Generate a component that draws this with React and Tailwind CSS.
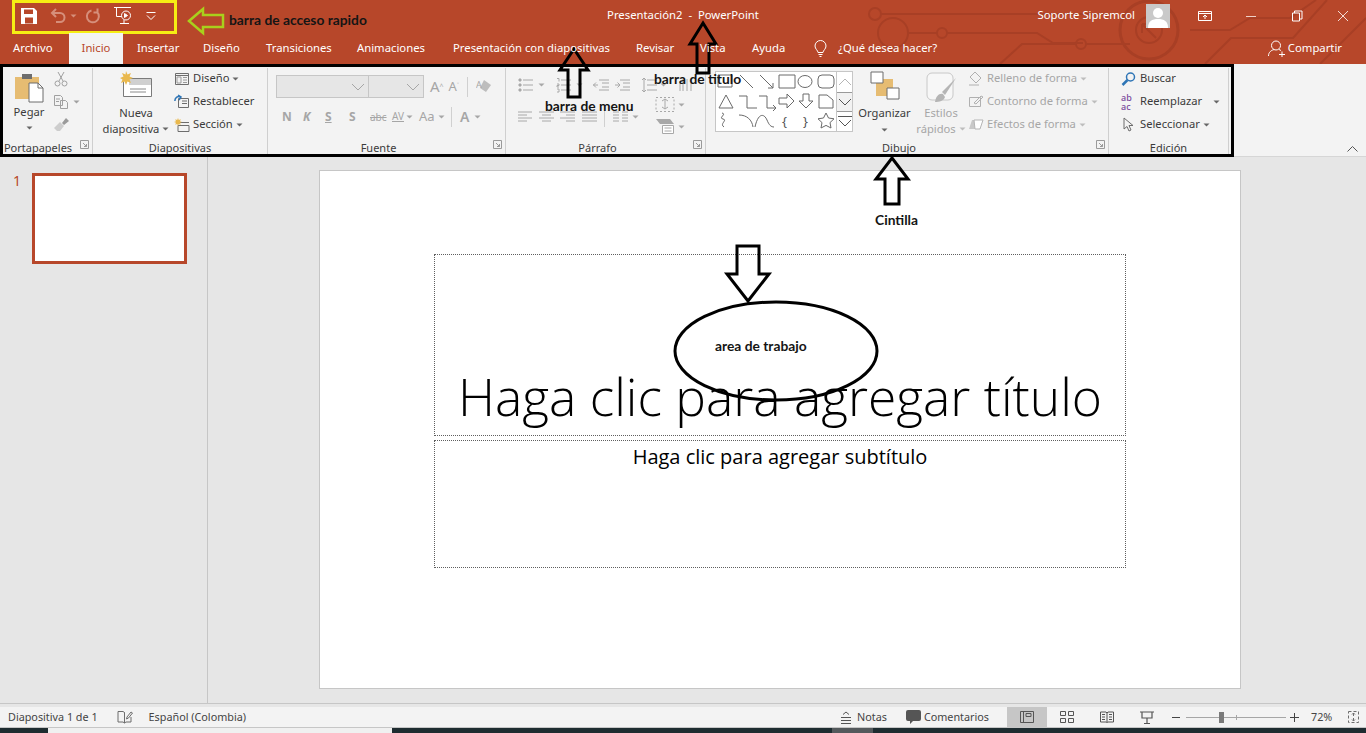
/**
 * PowerPoint window with hand-drawn annotations
 */

const Caret = ({ className = '' }) => (
  <svg width="7" height="4" viewBox="0 0 7 4" className={`shrink-0 ${className}`}>
    <path d="M0.5 0.5h6L3.5 3.5z" fill="currentColor" />
  </svg>
);

const Launcher = () => (
  <svg width="9" height="9" viewBox="0 0 9 9" fill="none" stroke="#9a9a9a">
    <path d="M0.5 8.500v-8h8v8z" />
    <path d="M3 3l3.500 3.500M6.500 4v2.500H4" />
  </svg>
);

const SmallIcon = ({ children, className = '' }) => (
  <svg width="16" height="16" viewBox="0 0 16 16" fill="none" stroke="currentColor" className={`shrink-0 ${className}`}>
    {children}
  </svg>
);

const Group = ({ label, width, launcher, children }) => (
  <div className={`flex flex-col shrink-0 border-r border-[#cfcfcf] ${width}`}>
    <div className="flex-1 flex min-h-0">{children}</div>
    <div className="relative h-[15px] flex items-center justify-center text-[11px] leading-none text-[#3b3b3b]">
      {label}
      {launcher && <span className="absolute right-[3px] top-0 flex"><Launcher /></span>}
    </div>
  </div>
);

const RibbonRow = ({ icon, label, caret, disabled }) => (
  <div className={`h-[23px] flex items-center gap-[3px] whitespace-nowrap ${disabled ? 'text-[#a6a6a6]' : 'text-[#3b3b3b]'}`}>
    {icon}
    <span>{label}</span>
    {caret && <Caret className={disabled ? 'text-[#bdbdbd]' : 'text-[#666666]'} />}
  </div>
);

const TitleBar = () => (
  <div className="relative z-10 h-[33px] pb-[2px] grid grid-cols-[1fr_auto_1fr] items-center text-white">
    <div className="flex items-center pl-[21px]">
      <svg width="16" height="16" viewBox="0 0 16 16">
        <path d="M0 0h13l3 3v13H0z" fill="#ffffff" />
        <path d="M3 1.500h9v4.500H3z" fill="#b7472a" />
        <path d="M4 9.500h8v6H4z" fill="#b7472a" />
      </svg>
      <div className="flex items-center gap-[3px] text-[#d68f7b] ml-[13px]">
        <svg width="17" height="15" viewBox="0 0 17 15" fill="none" stroke="currentColor" strokeWidth="2">
          <path d="M6 1L2 5l4 4M2 5h8a4.500 4.500 0 0 1 0 9H6" />
        </svg>
        <Caret />
      </div>
      <svg width="16" height="16" viewBox="0 0 16 16" fill="none" stroke="#d68f7b" strokeWidth="2" className="ml-[8px]">
        <path d="M6.500 2.500a6 6 0 1 0 5.500 1.500M12.500 0.500v4h-4" />
      </svg>
      <svg width="19" height="19" viewBox="0 0 19 19" fill="none" stroke="#ffffff" className="ml-[13px]">
        <path d="M0 1.500h17M2.500 1.500v9h5" />
        <circle cx="12" cy="9.500" r="4.500" />
        <path d="M10.500 7.500v4l3-2z" fill="#ffffff" />
        <path d="M6 17.500h9M10 14v3.500" />
      </svg>
      <svg width="10" height="8" viewBox="0 0 10 8" fill="none" stroke="#ffffff" className="ml-[13px]">
        <path d="M0.500 0.500h9M1 3.500l4 4 4-4" />
      </svg>
    </div>
    <div className="text-[11.300px] whitespace-pre">Presentación2  -  PowerPoint</div>
    <div className="flex items-center justify-end">
      <span className="text-[11.300px] whitespace-nowrap">Soporte Sipremcol</span>
      <div className="w-[24px] h-[24px] ml-[11px] bg-[#c9c9c9] overflow-hidden">
        <svg width="24" height="24" viewBox="0 0 24 24">
          <circle cx="12" cy="9" r="5" fill="#ffffff" />
          <path d="M2 24c0-7 4-9 10-9s10 2 10 9z" fill="#ffffff" />
        </svg>
      </div>
      <div className="flex items-center w-[196px] pl-[12px]">
        <svg width="46" height="12" viewBox="0 0 46 12" fill="none" stroke="#ffffff">
          <path d="M16.500 1.500h13v9h-13zM16.500 3.500h13M23 9V5M21 7l2-2 2 2" />
        </svg>
        <svg width="46" height="12" viewBox="0 0 46 12" fill="none" stroke="#f0d0c6">
          <path d="M18 6.500h10" />
        </svg>
        <svg width="46" height="12" viewBox="0 0 46 12" fill="none" stroke="#ffffff">
          <path d="M18.500 3h7v8h-7zM20.500 3V1h7.500v8h-2.500" />
        </svg>
        <svg width="46" height="12" viewBox="0 0 46 12" fill="none" stroke="#f3dcd5">
          <path d="M18 1l10 10M28 1L18 11" />
        </svg>
      </div>
    </div>
  </div>
);

const CircuitLines = () => (
  <svg width="536" height="64" viewBox="830 0 536 64" fill="none" stroke="#a83f25" strokeWidth="2" className="absolute right-0 top-0">
    <circle cx="875" cy="14" r="6" />
    <circle cx="893" cy="33" r="15" />
    <path d="M881 14H1110M908 33h30" />
    <circle cx="942" cy="33" r="5" />
    <path d="M947 33h90l16 10h30" />
    <circle cx="1081" cy="44" r="5" />
    <path d="M1000 64l22-20h55M1086 44h44" />
    <circle cx="1149" cy="30" r="29" strokeWidth="3" />
    <circle cx="1149" cy="30" r="13" />
    <path d="M1142 24h9M1142 24v9M1142 24l14 14" />
    <path d="M1190 30h40l20-12h40l26-18M1205 64l26-26h62l34-38M1320 64l46-46" />
  </svg>
);

const Tabs = () => (
  <div className="relative z-10 h-[31px] flex items-stretch text-[11.300px] text-white">
    {[
      ['Archivo', 'w-[69px] pl-[13px]'],
      ['Inicio', 'w-[54px] justify-center bg-[#f3f3f3] text-[#b7472a]'],
      ['Insertar', 'w-[66px] pl-[14px]'],
      ['Diseño', 'w-[63px] pl-[14px]'],
      ['Transiciones', 'w-[91px] pl-[14px]'],
      ['Animaciones', 'w-[96px] pl-[14px]'],
      ['Presentación con diapositivas', 'w-[183px] pl-[14px]'],
      ['Revisar', 'w-[64px] pl-[14px]'],
      ['Vista', 'w-[52px] pl-[14px]'],
      ['Ayuda', 'w-[62px] pl-[14px]'],
    ].map(([label, cls]) => (
      <div key={label} className={`flex items-center whitespace-nowrap ${cls}`}>{label}</div>
    ))}
    <div className="flex items-center pl-[14px] gap-[11px]">
      <svg width="13" height="17" viewBox="0 0 13 17" fill="none" stroke="#ffffff">
        <path d="M4 12.500c0-2-3-3.500-3-6.500a5.500 5.500 0 0 1 11 0c0 3-3 4.500-3 6.500zM4.500 14.500h4M5.500 16.500h2" />
      </svg>
      <span className="whitespace-nowrap">¿Qué desea hacer?</span>
    </div>
    <div className="ml-auto flex items-center pr-[24px] gap-[2px]">
      <svg width="18" height="17" viewBox="0 0 18 17" fill="none" stroke="#ffffff">
        <circle cx="8" cy="5.500" r="4.500" />
        <path d="M0.500 16c0-4 3-6 6-6.500M11 9.500l2 1M11 14.500h6M14 11.500v6" />
      </svg>
      <span>Compartir</span>
    </div>
  </div>
);

const Ribbon = () => (
  <div className="h-[93px] shrink-0 bg-[#f3f3f3] flex pl-[3px] pt-[4px] pb-[1px] text-[11.200px] border-b border-[#d6d6d6] relative">
    <Group label={<span className="-ml-[19px]">Portapapeles</span>} width="w-[90px]" launcher>
      <div className="w-[48px] flex flex-col items-center pl-[4px] text-[#3b3b3b]">
        <svg width="30" height="32" viewBox="0 0 30 32" className="mt-[3px]">
          <path d="M1 6h24v22H1z" fill="#e6bc72" />
          <path d="M8 3h10v5H8z" fill="#6d6d6d" />
          <path d="M15 12h9l5 5v14H15z" fill="#ffffff" stroke="#6d6d6d" />
          <path d="M24 12v5h5" fill="none" stroke="#6d6d6d" />
        </svg>
        <span className="mt-[2px] leading-[14px]">Pegar</span>
        <Caret className="mt-[7px] text-[#666666]" />
      </div>
      <div className="flex flex-col pl-[2px] pt-[3px] gap-[7px] text-[#a0a0a0]">
        <svg width="16" height="16" viewBox="0 0 16 16" fill="none" stroke="currentColor">
          <path d="M5 1l5 9M11 1L6 10" />
          <circle cx="4.500" cy="12.500" r="2.500" />
          <circle cx="11.500" cy="12.500" r="2.500" />
        </svg>
        <div className="flex items-center gap-[4px]">
          <svg width="16" height="16" viewBox="0 0 16 16" fill="none" stroke="currentColor">
            <path d="M1.500 1.500h6l2 2v8h-8zM7.500 6.500h5l2 2v6h-7zM3 5h4M3 7.500h3" />
          </svg>
          <Caret />
        </div>
        <svg width="17" height="15" viewBox="0 0 17 15">
          <path d="M9 6l4-5 3 3-5 4z" fill="#9a9a9a" />
          <path d="M1 11l6-6 4 4-4 5H4z" fill="#cdcdcd" />
        </svg>
      </div>
    </Group>

    <Group label="Diapositivas" width="w-[175px]">
      <div className="w-[78px] pl-[8px] flex flex-col items-center text-[#3b3b3b] leading-[16px]">
        <svg width="32" height="27" viewBox="0 0 32 27" className="mt-[3px]">
          <path d="M3.500 7.500h28v18h-28z" fill="#ffffff" stroke="#7a7a7a" />
          <path d="M9 8h22v6H9z" fill="#d0d0d0" />
          <path d="M10 18h16M10 21h16" stroke="#8a8a8a" />
          <path d="M6 0l1.500 3.500L11 2l-1.500 3.500L13 7l-3.500 1.500L11 12 7.500 10.500 6 14 4.500 10.500 1 12l1.500-3.500L0 7l3.500-1.500L2 2l3.500 1.500z" fill="#e9b84d" />
        </svg>
        <span className="mt-[7px]">Nueva</span>
        <span className="flex items-center gap-[3px] whitespace-nowrap">diapositiva<Caret className="text-[#666666]" /></span>
      </div>
      <div className="pl-[3px] -mt-[1px] flex flex-col">
        <RibbonRow label="Diseño" caret icon={
          <SmallIcon className="text-[#6d6d6d]"><path d="M1.500 2.500h13v11h-13zM1.500 4.500h13" /><path d="M3 6h4v6H3zM9 6.500h4M9 9h4M9 11.500h4" stroke="#9a9a9a" /></SmallIcon>
        } />
        <RibbonRow label="Restablecer" icon={
          <SmallIcon className="text-[#6d6d6d]"><path d="M4.500 4.500h10v9h-10zM8 7h5M8 9.500h5" /><path d="M1 7a4 4 0 0 1 6-4M4 1L7 3 5 6" stroke="#2e75b6" strokeWidth="1.500" /></SmallIcon>
        } />
        <RibbonRow label="Sección" caret icon={
          <SmallIcon className="text-[#6d6d6d]"><path d="M4 5.500h11M4 8.500h11v6H4z" /><path d="M4 1l.8 2 2-.8-.8 2 2 .8-2 .8.8 2-2-.8L4 9l-.8-2-2 .8.8-2-2-.8 2-.8-.8-2 2 .8z" fill="#e9b84d" stroke="none" /></SmallIcon>
        } />
      </div>
    </Group>

    <Group label={<span className="-ml-[16px]">Fuente</span>} width="w-[238px]" launcher>
      <div className="flex flex-col pl-[8px] pt-[7px] w-full text-[#a6a6a6]">
        <div className="flex items-center h-[23px]">
          <div className="w-[93px] h-[23px] bg-[#e6e6e6] border border-[#c6c6c6] flex items-center justify-end pr-[3px]">
            <svg width="14" height="8" viewBox="0 0 14 8" fill="none" stroke="#a6a6a6"><path d="M1 1l6 6 6-6" /></svg>
          </div>
          <div className="w-[55px] h-[23px] bg-[#e6e6e6] border border-l-0 border-[#c6c6c6] flex items-center justify-end pr-[3px]">
            <svg width="14" height="8" viewBox="0 0 14 8" fill="none" stroke="#a6a6a6"><path d="M1 1l6 6 6-6" /></svg>
          </div>
          <span className="ml-[6px] text-[15px] leading-none">A<sup className="text-[7px]">^</sup></span>
          <span className="ml-[5px] text-[13px] leading-none">A<sup className="text-[7px]">˅</sup></span>
          <span className="ml-[8px] w-px h-[20px] bg-[#d0d0d0]" />
          <svg width="17" height="15" viewBox="0 0 17 15" className="ml-[8px]">
            <path d="M8 1l7 5-5 7-6-4z" fill="#bdbdbd" />
            <text x="0" y="9" fontSize="9" fill="#a6a6a6" fontFamily="Noto Sans">A</text>
          </svg>
        </div>
        <div className="flex items-center mt-[7px] h-[23px] text-[12px] leading-none pl-[6px]">
          <span className="w-[21px] font-bold">N</span>
          <span className="w-[22px] font-bold italic">K</span>
          <span className="w-[24px] font-bold underline">S</span>
          <span className="w-[21px] font-bold">S</span>
          <span className="w-[22px] text-[10px] line-through">abc</span>
          <span className="w-[24px] text-[10px] flex items-center gap-[2px]"><span className="border-b border-[#a6a6a6]">AV</span><Caret /></span>
          <span className="ml-[3px] w-[32px] flex items-center gap-[3px] text-[13px]">Aa<Caret /></span>
          <span className="w-px h-[20px] bg-[#d0d0d0] mr-[8px]" />
          <span className="text-[14px] font-semibold flex items-center gap-[5px]">A<Caret /></span>
        </div>
      </div>
    </Group>

    <Group label={<span className="-ml-[16px]">Párrafo</span>} width="w-[200px]" launcher>
      <div className="flex flex-col pl-[12px] pt-[5px] text-[#a8a8a8] w-full">
        <div className="flex items-center h-[24px]">
          <SmallIcon><path d="M5 3h10M5 8h10M5 13h10" /><path d="M1 2h2v2H1zM1 7h2v2H1zM1 12h2v2H1z" fill="currentColor" /></SmallIcon>
          <Caret className="ml-[4px]" />
          <SmallIcon className="ml-[11px]"><path d="M5 3h10M5 8h10M5 13h10M1 1.500h2v3M1 7h2v1.500H1V10h2M1 12h2v3H1" /></SmallIcon>
          <Caret className="ml-[4px]" />
          <SmallIcon className="ml-[10px]"><path d="M6 3h10M9 6h7M9 10h7M6 13h10M5 8H0M3 5.500L0.500 8 3 10.500" /></SmallIcon>
          <SmallIcon className="ml-[5px]"><path d="M6 3h10M9 6h7M9 10h7M6 13h10M1 8h5M3.500 5.500L6 8l-2.500 2.500" /></SmallIcon>
          <SmallIcon className="ml-[11px]"><path d="M6 3h10M6 8h10M6 13h10M3 1v14M1 3l2-2 2 2M1 13l2 2 2-2" /></SmallIcon>
          <Caret className="ml-[3px]" />
          <SmallIcon className="ml-[11px]"><path d="M2 14V4h5M5 2v12M9 2v12M13 2v12" /></SmallIcon>
        </div>
        <div className="flex items-start">
          <div className="flex items-center mt-[10px]">
            <SmallIcon><path d="M0 3h14M0 6h9M0 9h14M0 12h9" /></SmallIcon>
            <SmallIcon className="ml-[5px]"><path d="M0 3h15M3 6h9M0 9h15M3 12h9" /></SmallIcon>
            <SmallIcon className="ml-[5px]"><path d="M0 3h15M6 6h9M0 9h15M6 12h9" /></SmallIcon>
            <SmallIcon className="ml-[6px]"><path d="M0 3h15M0 6h15M0 9h15M0 12h15" /></SmallIcon>
            <span className="w-px h-[20px] bg-[#d0d0d0] ml-[6px]" />
            <SmallIcon className="ml-[8px]"><path d="M0 3h6M0 6h6M0 9h6M0 12h6M9 3h6M9 6h6M9 9h6M9 12h6" /></SmallIcon>
            <Caret className="ml-[3px]" />
          </div>
          <div className="flex flex-col ml-[16px] gap-[5px] -mt-[1px]">
            <div className="flex items-center gap-[3px]">
              <svg width="20" height="17" viewBox="0 0 20 17" fill="none" stroke="currentColor"><path d="M1 1.500h18v14H1z" strokeDasharray="2 2" /><path d="M10 3v10M7 5l3-2 3 2M7 11l3 2 3-2" /></svg>
              <Caret />
            </div>
            <div className="flex items-center gap-[3px]">
              <svg width="20" height="17" viewBox="0 0 20 17"><path d="M1 1h14l4 5H5z" fill="#a8a8a8" /><path d="M7.500 7.500h11v8h-11zM9.500 10h7M9.500 13h7" fill="#ffffff" stroke="#a8a8a8" /></svg>
              <Caret />
            </div>
          </div>
        </div>
      </div>
    </Group>

    <Group label={<span className="-ml-[16px]">Dibujo</span>} width="w-[403px]" launcher>
      <div className="ml-[9px] mt-[3px] w-[138px] h-[61px] flex bg-white border border-[#c6c6c6]">
        <svg width="120" height="59" viewBox="0 0 120 59" fill="none" stroke="#6a6a6a" className="shrink-0">
          <path d="M2 3h14v12H2z" />
          <path d="M24 3l13 13M44 3l13 13M57 11v5h-5" />
          <path d="M63 3h16v13H63z" />
          <ellipse cx="89" cy="9.500" rx="7" ry="6" />
          <rect x="102" y="3" width="16" height="13" rx="4" />
          <path d="M3 36l7-13 7 13zM23 24h8v12h10M43 24h8v12h9M57 33l3 3-3 3" />
          <path d="M63 26h8v-4l7 7-7 7v-4h-8zM87 22h6v7h4l-7 7-7-7h4z" />
          <path d="M103 36v-13h8l6 5v8z" />
          <path d="M6 41c5 1-4 5 1 6s-4 5 1 8M23 43c8 0 13 5 14 12M39 55c3-14 9-14 12-7 2 5 4 7 7 7" />
          <text x="66" y="54" fontSize="13" fill="#555555" stroke="none" fontFamily="Noto Sans">{'{'}</text>
          <text x="87" y="54" fontSize="13" fill="#555555" stroke="none" fontFamily="Noto Sans">{'}'}</text>
          <path d="M110 41l2.500 5 5.500.8-4 3.800 1 5.400-5-2.600-5 2.600 1-5.400-4-3.800 5.500-.8z" />
        </svg>
        <div className="flex-1 flex flex-col border-l border-[#c6c6c6]">
          <div className="h-[20px] flex items-center justify-center">
            <svg width="14" height="8" viewBox="0 0 14 8" fill="none" stroke="#b5b5b5"><path d="M1 7l6-6 6 6" /></svg>
          </div>
          <div className="h-[20px] flex items-center justify-center bg-[#f2f2f2] border-y border-[#9a9a9a]">
            <svg width="14" height="8" viewBox="0 0 14 8" fill="none" stroke="#555555"><path d="M1 1l6 6 6-6" /></svg>
          </div>
          <div className="flex-1 flex flex-col items-center justify-center gap-[2px]">
            <span className="w-[14px] h-px bg-[#555555]" />
            <svg width="14" height="8" viewBox="0 0 14 8" fill="none" stroke="#555555"><path d="M1 1l6 6 6-6" /></svg>
          </div>
        </div>
      </div>
      <div className="w-[61px] ml-[1px] flex flex-col items-center text-[#3b3b3b] leading-[16px]">
        <svg width="30" height="30" viewBox="0 0 30 30" className="mt-[3px]">
          <path d="M6 8h17v17H6z" fill="#e6bc72" />
          <path d="M1 1h12v11H1zM17 17h12v11H17z" fill="#ffffff" stroke="#6d6d6d" />
        </svg>
        <span className="mt-[4px]">Organizar</span>
        <Caret className="mt-[7px] text-[#666666]" />
      </div>
      <div className="w-[52px] flex flex-col items-center text-[#a6a6a6] leading-[16px]">
        <svg width="31" height="31" viewBox="0 0 31 31" className="mt-[4px]">
          <rect x="1" y="1" width="26" height="27" rx="5" fill="#f7f7f7" stroke="#c8c8c8" />
          <path d="M30 6L16 20l3 3z" fill="#b5b5b5" />
          <path d="M9 30c1-6 4-9 8-8l2 3c-1 4-6 5-10 5z" fill="#b5b5b5" />
        </svg>
        <span className="mt-[2px]">Estilos</span>
        <span className="flex items-center gap-[3px] whitespace-nowrap">rápidos<Caret className="text-[#bdbdbd]" /></span>
      </div>
      <div className="flex flex-col ml-[1px] -mt-[1px]">
        <RibbonRow disabled label="Relleno de forma" caret icon={
          <SmallIcon className="text-[#b0b0b0]"><path d="M7 1l6 6-5 5-6-6zM1 14h10" /></SmallIcon>
        } />
        <RibbonRow disabled label="Contorno de forma" caret icon={
          <SmallIcon className="text-[#b0b0b0]"><path d="M1.500 3.500h11v9h-11zM6 9l7-7 2 1-7 7z" /></SmallIcon>
        } />
        <RibbonRow disabled label="Efectos de forma" caret icon={
          <svg width="16" height="16" viewBox="0 0 16 16"><path d="M1 12l3-9h11l-3 9z" fill="#c9c9c9" /><path d="M6 3h9l-3 9H7z" fill="#ffffff" stroke="#b5b5b5" /></svg>
        } />
      </div>
    </Group>

    <Group label="Edición" width="w-[120px]">
      <div className="flex flex-col pl-[12px] -mt-[1px] w-full">
        <RibbonRow label="Buscar" icon={
          <svg width="15" height="14" viewBox="0 0 15 14" fill="none" className="shrink-0 mr-[1px]">
            <circle cx="9.500" cy="5" r="4" stroke="#2e75b6" strokeWidth="1.500" />
            <path d="M6.500 8L1.500 13" stroke="#2e75b6" strokeWidth="2.500" />
          </svg>
        } />
        <div className="h-[23px] flex items-center text-[#3b3b3b]">
          <span className="w-[17px] text-[9px] leading-[9px] text-[#7a4a9c] font-medium">ab<br />ac</span>
          <span className="ml-[2px] whitespace-nowrap">Reemplazar</span>
          <Caret className="ml-[11px] text-[#666666]" />
        </div>
        <RibbonRow label="Seleccionar" caret icon={
          <svg width="14" height="16" viewBox="0 0 14 16" fill="none" stroke="#6d6d6d" className="shrink-0 mr-[2px]">
            <path d="M3 1v11l3-2.500 2 4.500 2-1-2-4.500h4z" />
          </svg>
        } />
      </div>
    </Group>

    <svg width="11" height="6" viewBox="0 0 11 6" fill="none" stroke="#555555" className="absolute right-[8px] bottom-[4px]">
      <path d="M0.500 5.500l5-5 5 5" />
    </svg>
  </div>
);

const Workspace = () => (
  <div className="flex-1 flex min-h-0 bg-[#e6e6e6] border-b border-[#c6c6c6]">
    <div className="w-[208px] shrink-0 border-r border-[#c6c6c6] flex items-start pt-[16px] pl-[13px]">
      <span className="text-[14px] leading-[16px] w-[19px] text-[#b7472a]">1</span>
      <div className="w-[155px] h-[91px] bg-white border-[3px] border-[#b7472a]" />
    </div>
    <div className="flex-1 pt-[13px] pl-[111px]">
      <div className="w-[922px] h-[519px] bg-white border border-[#c6c6c6] pt-[83px] pl-[114px] text-black">
        <div className="w-[692px] h-[182px] border border-dotted border-[#5f5f5f] flex items-end justify-center overflow-hidden">
          <span className="text-[51.500px] leading-[66px] mb-[6px] font-light whitespace-nowrap font-['Open_Sans',sans-serif]">Haga clic para agregar título</span>
        </div>
        <div className="w-[692px] h-[128px] mt-[4px] border border-dotted border-[#5f5f5f] text-center text-[20px] leading-[28px] pt-[2px] font-['Open_Sans',sans-serif]">
          Haga clic para agregar subtítulo
        </div>
      </div>
    </div>
  </div>
);

const StatusBar = () => (
  <div className="h-[21px] shrink-0 bg-[#f3f3f3] flex items-stretch text-[10.800px] text-[#444444] border-b border-[#c6c6c6] mt-[3px]">
    <span className="pl-[8px] self-center">Diapositiva 1 de 1</span>
    <svg width="16" height="14" viewBox="0 0 16 14" fill="none" stroke="#6d6d6d" className="self-center ml-[19px]">
      <path d="M1 1.500h5l1.500 1v10.500l-1.500-1H1zM7.500 2.500v10.500l1.500-1h5V7" />
      <path d="M10 7l4-5 1.500 1-4 5-2 1z" />
    </svg>
    <span className="self-center ml-[16px]">Español (Colombia)</span>
    <div className="ml-auto flex items-stretch">
      <div className="flex items-center gap-[5px]">
        <svg width="12" height="13" viewBox="0 0 12 13" fill="none" stroke="#555555"><path d="M3 3.500L6 1l3 2.500M1 6.500h10M1 9.500h10M1 12.500h10" /></svg>
        <span>Notas</span>
      </div>
      <div className="flex items-center gap-[3px] ml-[19px] mr-[18px]">
        <svg width="15" height="14" viewBox="0 0 15 14"><path d="M2 0h11a2 2 0 0 1 2 2v7a2 2 0 0 1-2 2H7l-3 3v-3H2a2 2 0 0 1-2-2V2a2 2 0 0 1 2-2z" fill="#555555" /></svg>
        <span>Comentarios</span>
      </div>
      <div className="w-[40px] bg-[#c6c6c6] flex items-center justify-center">
        <svg width="14" height="12" viewBox="0 0 14 12" fill="none" stroke="#555555"><path d="M0.500 0.500h13v11h-13zM3.500 0.500v11M6 2.500h5v3H6z" /></svg>
      </div>
      <div className="w-[40px] flex items-center justify-center">
        <svg width="14" height="12" viewBox="0 0 14 12" fill="none" stroke="#555555"><path d="M0.500 0.500h5v4h-5zM8.500 0.500h5v4h-5zM0.500 7.500h5v4h-5zM8.500 7.500h5v4h-5z" /></svg>
      </div>
      <div className="w-[40px] flex items-center justify-center">
        <svg width="14" height="12" viewBox="0 0 14 12" fill="none" stroke="#555555"><path d="M0.500 1h5.500l1 1 1-1h5.500v10h-5.500l-1 .500-1-.500H0.500zM7 2v9M2 3.500h3M2 6h3M2 8.500h3M9 3.500h3M9 6h3M9 8.500h3" /></svg>
      </div>
      <div className="w-[40px] flex items-center justify-center">
        <svg width="14" height="13" viewBox="0 0 14 13" fill="none" stroke="#555555"><path d="M0 1h14M2 1v6h10V1M7 7v5M4 12.500h6" strokeWidth="1.200" /></svg>
      </div>
      <div className="flex items-center pl-[5px] pr-[7px]">
        <span className="w-[8px] h-px bg-[#444444]" />
        <div className="relative w-[100px] h-px bg-[#a6a6a6] ml-[6px] mr-[4px]">
          <span className="absolute left-[33px] -top-[5px] w-[5px] h-[11px] bg-[#7a7a7a]" />
          <span className="absolute left-[50px] -top-[2px] w-px h-[5px] bg-[#a6a6a6]" />
        </div>
        <svg width="9" height="9" viewBox="0 0 9 9" stroke="#444444"><path d="M0 4.500h9M4.500 0v9" /></svg>
        <span className="ml-[12px] w-[21px] whitespace-nowrap">72%</span>
        <svg width="11" height="12" viewBox="0 0 11 12" fill="none" stroke="#6d6d6d" className="ml-[16px]"><path d="M0.500 0.500h10v11h-10z" strokeDasharray="3 2" /><path d="M5.500 2v3M4 3.500l1.500-1.500L7 3.500M5.500 10V7M4 8.500L5.500 10 7 8.500" /></svg>
      </div>
    </div>
  </div>
);

const Taskbar = () => (
  <div className="h-[5px] shrink-0 bg-[#1e2c30] flex">
    <div className="ml-[48px] w-[344px] bg-[#f0f0f0]" />
    <div className="ml-[440px] w-[41px] bg-[#54595c]" />
  </div>
);

// hand-drawn notes that were pasted over the screenshot
const Annotations = () => (
  <div className="font-['Lato',sans-serif] font-bold text-[13.800px] leading-none text-[#151515] whitespace-nowrap">
    <div className="absolute left-[12px] top-0 w-[165px] h-[34px] border-[3px] border-[#f6ee14]" />
    <div className="absolute left-0 top-[64px] w-[1234px] h-[93px] border-[3px] border-black" />
    <svg width="1366" height="733" viewBox="0 0 1366 733" fill="none" className="absolute left-0 top-0 pointer-events-none">
      <path d="M189 21l14-12v6h20v12h-20v6z" stroke="#a9d01c" strokeWidth="2.500" />
      <g stroke="#000000" strokeWidth="3" fill="none">
        <path d="M574 49l14 21h-8v27h-12V70h-8z" />
        <path d="M703 23l13 21h-7v29h-12V44h-7z" />
        <path d="M892 158l16 21h-9v25h-14v-25h-9z" />
        <path d="M737 246h22v28h10l-21 27-21-27h10z" />
        <ellipse cx="776" cy="351" rx="101" ry="49" />
      </g>
    </svg>
    <span className="absolute left-[229px] top-[13px]">barra de acceso rapido</span>
    <span className="absolute left-[545px] top-[99px]">barra de menu</span>
    <span className="absolute left-[654px] top-[72px]">barra de titulo</span>
    <span className="absolute left-[875px] top-[213px]">Cintilla</span>
    <span className="absolute left-[715px] top-[339px]">area de trabajo</span>
  </div>
);

const App = () => (
  <div className="relative w-[1366px] h-[733px] overflow-hidden flex flex-col bg-[#e6e6e6] font-['Noto_Sans',sans-serif]">
    <div className="relative h-[64px] shrink-0 bg-[#b7472a] overflow-hidden">
      <CircuitLines />
      <TitleBar />
      <Tabs />
    </div>
    <Ribbon />
    <Workspace />
    <StatusBar />
    <Taskbar />
    <Annotations />
  </div>
);

export default App;
